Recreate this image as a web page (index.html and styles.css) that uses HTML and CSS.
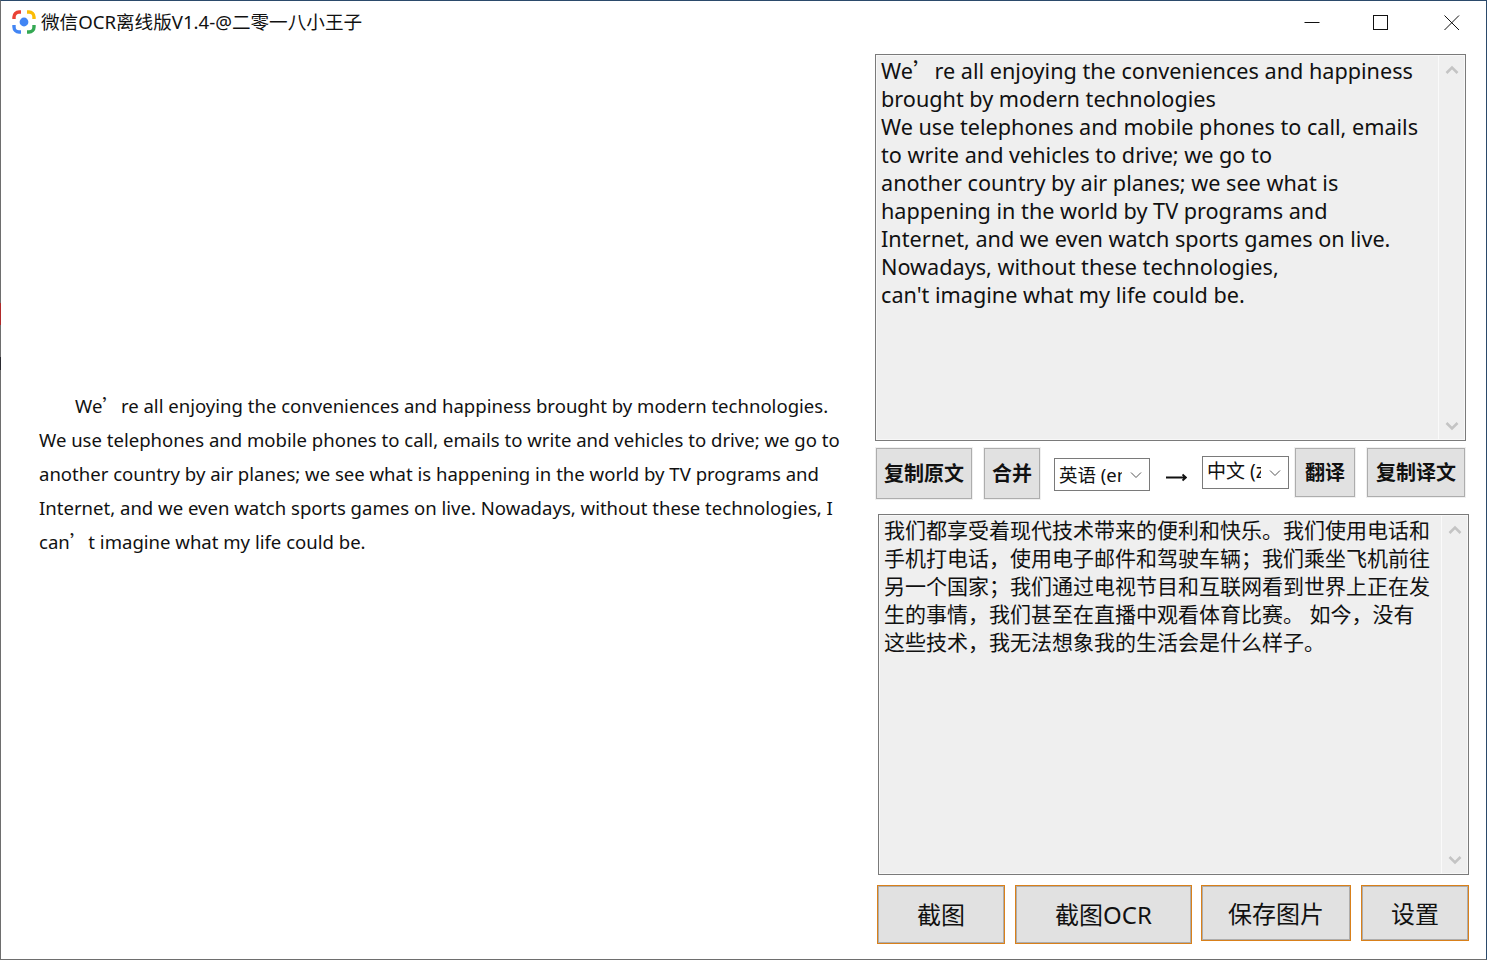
FILE: index.html
```html
<!DOCTYPE html>
<html lang="zh-CN">
<head>
  <meta charset="UTF-8" />
  <title>微信OCR离线版V1.4</title>
  <link rel="stylesheet" href="styles.css">
</head>
<body>
  <div class="window">

    <div class="title-bar">
      <svg class="app-icon" width="24" height="24" viewBox="0 0 24 24" fill="none" stroke-width="3.4">
        <path d="M2 9V7a5 5 0 0 1 5-5h2" stroke="#ea4335"/>
        <path d="M15 2h2a5 5 0 0 1 5 5v2" stroke="#fbbc05"/>
        <path d="M22 15v2a5 5 0 0 1-5 5h-2" stroke="#34a853"/>
        <path d="M9 22H7a5 5 0 0 1-5-5v-2" stroke="#4285f4"/>
        <circle cx="12" cy="12" r="4.4" fill="#4285f4" stroke="none"/>
      </svg>
      <div class="title">微信OCR离线版V1.4-@二零一八小王子</div>
      <div class="win-controls">
        <svg class="win-btn" width="16" height="16" viewBox="0 0 16 16"><path d="M0.5 7.5h15" stroke="#111" fill="none"/></svg>
        <svg class="win-btn win-max" width="16" height="16" viewBox="0 0 16 16"><rect x="0.5" y="0.5" width="14" height="14" stroke="#111" fill="none"/></svg>
        <svg class="win-btn" width="16" height="16" viewBox="0 0 16 16"><path d="M0.5 0.5l14.5 14.5M15 0.5L0.5 15" stroke="#111" fill="none"/></svg>
      </div>
    </div>

    <div class="main">
      <div class="picture">
        <p class="picture-text">We<span class="ap">’</span>re all enjoying the conveniences and happiness brought by modern technologies.<br>We use telephones and mobile phones to call, emails to write and vehicles to drive; we go to<br>another country by air planes; we see what is happening in the world by TV programs and<br>Internet, and we even watch sports games on live. Nowadays, without these technologies, I<br>can<span class="ap">’</span>t imagine what my life could be.</p>
      </div>

      <div class="side">
        <div class="text-box source">
          <div class="box-text">We<span class="ap">’</span>re all enjoying the conveniences and happiness<br>brought by modern technologies<br>We use telephones and mobile phones to call, emails<br>to write and vehicles to drive; we go to<br>another country by air planes; we see what is<br>happening in the world by TV programs and<br>Internet, and we even watch sports games on live.<br>Nowadays, without these technologies,<br>can't imagine what my life could be.</div>
          <div class="scroll">
            <svg width="14" height="10" viewBox="0 0 14 10"><path d="M1.5 8L7 2.5 12.5 8" stroke="#c4c4c4" stroke-width="2.6" fill="none"/></svg>
            <svg width="14" height="10" viewBox="0 0 14 10"><path d="M1.5 2L7 7.5 12.5 2" stroke="#c4c4c4" stroke-width="2.6" fill="none"/></svg>
          </div>
        </div>

        <div class="toolbar">
          <button class="btn bold copy-src">复制原文</button>
          <button class="btn bold merge">合并</button>
          <div class="combo combo-from">
            <span class="combo-text">英语 (en)</span>
            <svg width="12" height="8" viewBox="0 0 12 8"><path d="M1 1.5l5 5 5-5" stroke="#555" fill="none"/></svg>
          </div>
          <svg class="arrow" width="21" height="11" viewBox="0 0 21 11"><path d="M0 5.5h20M16.5 2.5l3.5 3-3.5 3" stroke="#111" stroke-width="1.8" fill="none"/></svg>
          <div class="combo combo-to">
            <span class="combo-text">中文 (zh)</span>
            <svg width="12" height="8" viewBox="0 0 12 8"><path d="M1 1.5l5 5 5-5" stroke="#555" fill="none"/></svg>
          </div>
          <button class="btn bold translate">翻译</button>
          <button class="btn bold copy-dst">复制译文</button>
        </div>

        <div class="text-box result">
          <div class="box-text">我们都享受着现代技术带来的便利和快乐。我们使用电话和<br>手机打电话，使用电子邮件和驾驶车辆；我们乘坐飞机前往<br>另一个国家；我们通过电视节目和互联网看到世界上正在发<br>生的事情，我们甚至在直播中观看体育比赛。 如今，没有<br>这些技术，我无法想象我的生活会是什么样子。</div>
          <div class="scroll">
            <svg width="14" height="10" viewBox="0 0 14 10"><path d="M1.5 8L7 2.5 12.5 8" stroke="#c4c4c4" stroke-width="2.6" fill="none"/></svg>
            <svg width="14" height="10" viewBox="0 0 14 10"><path d="M1.5 2L7 7.5 12.5 2" stroke="#c4c4c4" stroke-width="2.6" fill="none"/></svg>
          </div>
        </div>

        <div class="actions">
          <button class="btn big shot">截图</button>
          <button class="btn big shot-ocr">截图OCR</button>
          <button class="btn big save">保存图片</button>
          <button class="btn big settings">设置</button>
        </div>
      </div>
    </div>

  </div>
</body>
</html>
```

FILE: styles.css
```css
* { box-sizing: border-box; }

html, body {
  margin: 0;
  height: 100%;
  overflow: hidden;
}

body {
  font-family: "Noto Sans", "Noto Sans CJK SC", sans-serif;
  color: #111;
  background-color: #fff;
}

.window {
  position: relative;
  height: 960px;
  display: flex;
  flex-direction: column;
  border: 1px solid #6e6e6e;
  border-top-color: #2b4a6b;
  border-right-color: #2b4a6b;
  background-color: #fff;
}

/* desktop showing through at the left edge */
.window::before {
  content: "";
  position: absolute;
  left: -1px;
  top: 302px;
  width: 1px;
  height: 67px;
  background: linear-gradient(#b02a2a 0 22px, #6e6e6e 22px 54px, #2a2a30 54px);
}

.title-bar {
  height: 43px;
  flex: none;
  display: flex;
  align-items: center;
  padding-left: 11px;
}

.app-icon {
  flex: none;
  margin-top: -1px;
}

.title {
  margin: -2px 0 0 5px;
  font-size: 18.6px;
  line-height: 24px;
  white-space: nowrap;
}

.win-controls {
  margin-left: auto;
  display: flex;
  gap: 54px;
  padding-right: 26px;
}

.win-btn {
  display: block;
}

.win-max {
  margin: 0 1px 0 -1px;
}

.main {
  flex: 1;
  display: flex;
  min-height: 0;
}

.picture {
  width: 874px;
  flex: none;
  padding: 345px 0 0 38px;
}

.picture-text {
  margin: 0;
  font-size: 18.56px;
  line-height: 34px;
  text-indent: 36px;
  white-space: nowrap;
}

.ap {
  font-family: "Noto Sans CJK SC", sans-serif;
  line-height: 1;
}

.side {
  flex: 1;
  display: flex;
  flex-direction: column;
  padding-top: 10px;
}

.text-box {
  display: flex;
  background-color: #efefef;
  border: 1px solid #7a7a7a;
  box-shadow: inset 0 0 0 1px #f8f8f8;
}

.source {
  width: 591px;
  height: 387px;
}

.result {
  width: 591px;
  height: 361px;
  margin: 15px 0 0 3px;
}

.box-text {
  flex: 1;
  white-space: nowrap;
  overflow: hidden;
}

.source .box-text {
  padding: 2px 0 0 5px;
  font-size: 21.63px;
  line-height: 28px;
}

.result .box-text {
  padding: 1px 0 0 5px;
  font-size: 21px;
  line-height: 28px;
}

.scroll {
  width: 27px;
  flex: none;
  border-left: 1px solid #fafafa;
  display: flex;
  flex-direction: column;
  align-items: center;
  justify-content: space-between;
  padding: 10px 0 9px;
}

.btn {
  font-family: inherit;
  color: #111;
  background-color: #e1e1e1;
  border: 1px solid #adadad;
  padding: 0 0 2px;
  white-space: nowrap;
  flex: none;
}

.btn.bold {
  font-size: 20px;
  font-weight: 700;
  box-shadow: 0 0 0 1px #f0f0f0;
}

.toolbar {
  display: flex;
  align-items: flex-start;
  margin: 7px 0 0 1px;
  height: 51px;
}

.copy-src { width: 96px; height: 51px; }
.merge { width: 56px; height: 51px; margin-left: 12px; }
.translate { width: 60px; height: 49px; margin-left: 6px; }
.copy-dst { width: 98px; height: 49px; margin-left: 12px; }

.combo {
  flex: none;
  display: flex;
  align-items: center;
  background-color: #fff;
  border: 1px solid #7a7a7a;
  padding-left: 4px;
  font-size: 18.5px;
  height: 33px;
}

.combo svg {
  flex: none;
  margin-left: 8px;
}

.combo-text {
  overflow: hidden;
  white-space: nowrap;
  line-height: 27px;
}

.combo-from { width: 96px; margin: 10px 0 0 14px; }
.combo-from .combo-text { width: 63px; }
.combo-to { width: 87px; margin: 8px 0 0 0; }
.combo-to .combo-text { width: 54px; font-size: 19px; margin-bottom: 3px; }

.arrow {
  flex: none;
  margin: 24px 15px 0 16px;
}

.actions {
  display: flex;
  align-items: flex-start;
  margin: 10px 0 0 2px;
}

.btn.big {
  font-size: 24px;
  font-weight: 400;
  outline: 1px solid #d9801a;
  outline-offset: -1px;
  border-width: 2px;
}

.shot { width: 128px; height: 59px; }
.shot-ocr { width: 177px; height: 59px; margin-left: 10px; }
.save { width: 150px; height: 56px; margin-left: 9px; }
.settings { width: 108px; height: 56px; margin-left: 10px; }
```
